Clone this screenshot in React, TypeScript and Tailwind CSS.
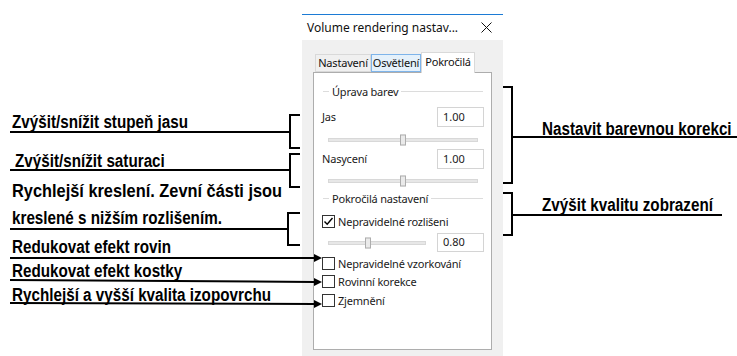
import React from "react";

const ui = "font-['Noto_Sans','Open_Sans',sans-serif]";

function Ann({ className = "", children }: { className?: string; children: React.ReactNode }) {
  return <div className={`origin-left whitespace-nowrap ${className}`}>{children}</div>;
}

function GroupHeader({ label }: { label: string }) {
  return (
    <div className="flex items-center h-[16px] pl-[9px] pr-[8px]">
      <div className="w-[6px] h-px bg-[#dcdcdc]" />
      <span className="mx-[3px] text-[11px] tracking-[-0.2px] leading-none text-[#1a1a1a]">{label}</span>
      <div className="flex-1 h-px bg-[#dcdcdc]" />
    </div>
  );
}

function Input({ value, h = 20 }: { value: string; h?: number }) {
  return (
    <div
      className={`w-[47px] ${h === 20 ? "h-[20px]" : "h-[19px]"} bg-white border border-[#d4d4d4] flex items-center pl-[5px] text-[11px] text-[#1a1a1a]`}
    >
      {value}
    </div>
  );
}

function Slider({ w, thumb }: { w: number; thumb: number }) {
  return (
    <div className="relative h-[4px] bg-[#e7e7e7] border border-[#d8d8d8]" style={{ width: w }}>
      <div
        className="absolute top-1/2 -translate-y-1/2 w-[6px] h-[11px] bg-[#eaeaea] border border-[#adadad]"
        style={{ left: thumb }}
      />
    </div>
  );
}

function Check({ checked = false, label }: { checked?: boolean; label: string }) {
  return (
    <div className="flex items-center pl-[8px] gap-[3px] h-full">
      <div className="w-[13px] h-[13px] border border-[#333] bg-white flex items-center justify-center">
        {checked && (
          <svg width="11" height="11" viewBox="0 0 11 11">
            <path d="M1.5 5.5 L4.2 8.3 L9.5 2" stroke="#000" strokeWidth="1.4" fill="none" />
          </svg>
        )}
      </div>
      <span className="text-[11px] tracking-[-0.2px] leading-none text-[#1a1a1a]">{label}</span>
    </div>
  );
}

function Dialog() {
  return (
    <div className={`w-[201px] shrink-0 mt-[14px] flex flex-col border-t border-[#1c7bd5] ${ui}`}>
      <div className="h-[25px] bg-white flex items-center justify-between pl-[5px] pr-[11px]">
        <span className="text-[12px] text-[#111]">Volume rendering nastav...</span>
        <svg width="11" height="11" viewBox="0 0 11 11">
          <path d="M0.5 0.5 L10.5 10.5 M10.5 0.5 L0.5 10.5" stroke="#111" strokeWidth="1" />
        </svg>
      </div>
      <div className="flex-1 bg-[#f0f0f0] pt-[12px] px-[11px] pb-[6px] flex flex-col">
        <div className="flex items-end h-[20px] pl-[2px] text-[11px] tracking-[-0.2px] text-[#111]">
          <div className="w-[56px] h-[18px] border border-[#d9d9d9] bg-[#f0f0f0] flex items-center justify-center">
            Nastavení
          </div>
          <div className="w-[50px] h-[18px] border border-[#7eb4ea] bg-[#e5f1fb] flex items-center justify-center">
            Osvětlení
          </div>
          <div className="relative z-10 -mb-px w-[54px] h-[21px] border border-b-0 border-[#d9d9d9] bg-white flex items-center justify-center pb-[2px]">
            Pokročilá
          </div>
        </div>
        <div className="flex-1 bg-white border border-[#adadad] flex flex-col">
          <div className="mt-[10px]">
            <GroupHeader label="Úprava barev" />
          </div>
          <div className="mt-[8px] h-[20px] flex items-center justify-between pl-[8px] pr-[7px]">
            <span className="text-[11px] tracking-[-0.2px] text-[#1a1a1a]">Jas</span>
            <Input value="1.00" />
          </div>
          <div className="mt-[7px] h-[12px] flex items-center pl-[14px]">
            <Slider w={150} thumb={71} />
          </div>
          <div className="mt-[3px] h-[20px] flex items-center justify-between pl-[8px] pr-[7px]">
            <span className="text-[11px] tracking-[-0.2px] text-[#1a1a1a]">Nasycení</span>
            <Input value="1.00" />
          </div>
          <div className="mt-[6px] h-[12px] flex items-center pl-[14px]">
            <Slider w={150} thumb={71} />
          </div>
          <div className="mt-[3px]">
            <GroupHeader label="Pokročilá nastavení" />
          </div>
          <div className="mt-[7px] h-[17px]">
            <Check checked label="Nepravidelné rozlišeni" />
          </div>
          <div className="mt-[3px] h-[19px] flex items-center pl-[14px] pr-[7px]">
            <Slider w={98} thumb={36} />
            <div className="ml-auto">
              <Input value="0.80" h={19} />
            </div>
          </div>
          <div className="mt-[2px] h-[18px]">
            <Check label="Nepravidelné vzorkování" />
          </div>
          <div className="h-[19px]">
            <Check label="Rovinní korekce" />
          </div>
          <div className="h-[18px]">
            <Check label="Zjemnění" />
          </div>
        </div>
      </div>
    </div>
  );
}

export default function App() {
  return (
    <div className="relative w-[737px] h-[356px] bg-white overflow-hidden flex">
      <div className="w-[302px] shrink-0 flex flex-col pl-[12px] font-['Liberation_Sans',Arial,sans-serif] font-bold text-[18px] text-black">
        <Ann className="mt-[112px] leading-[20px] scale-x-[0.846]">Zvýšit/snížit stupeň jasu</Ann>
        <Ann className="mt-[19px] ml-[3px] leading-[20px] scale-x-[0.846]">Zvýšit/snížit saturaci</Ann>
        <Ann className="mt-[6.5px] leading-[27px] scale-x-[0.909]">Rychlejší kreslení. Zevní části jsou</Ann>
        <Ann className="leading-[27px] scale-x-[0.846]">kreslené s nižším rozlišením.</Ann>
        <Ann className="mt-[3.5px] leading-[24px] scale-x-[0.846]">Redukovat efekt rovin</Ann>
        <Ann className="leading-[24px] scale-x-[0.846]">Redukovat efekt kostky</Ann>
        <Ann className="leading-[24px] scale-x-[0.846]">Rychlejší a vyšší kvalita izopovrchu</Ann>
      </div>
      <Dialog />
      <div className="flex-1 flex flex-col pl-[39px] font-['Liberation_Sans',Arial,sans-serif] font-bold text-[18px] text-black">
        <Ann className="mt-[119px] leading-[20px] scale-x-[0.846]">Nastavit barevnou korekci</Ann>
        <Ann className="mt-[56px] leading-[20px] scale-x-[0.846]">Zvýšit kvalitu zobrazení</Ann>
      </div>
      <svg
        className="absolute inset-0 pointer-events-none"
        width="737"
        height="356"
        viewBox="0 0 737 356"
        fill="none"
        stroke="#000"
        strokeWidth="2"
      >
        <path d="M10 132 H290 M300 115 H290 V148 H300" />
        <path d="M10 170 H290 M300 154 H290 V187 H300" />
        <path d="M10 229 H288 M300 213 H288 V245 H300" />
        <path d="M10 258 L315 258" />
        <polygon points="322,258 314,254 314,262" fill="#000" stroke="none" />
        <path d="M10 280 L315 282" />
        <polygon points="322,282 314,278 314,286" fill="#000" stroke="none" />
        <path d="M10 303 L315 304" />
        <polygon points="322,304 314,300 314,308" fill="#000" stroke="none" />
        <path d="M503 87 H512 V183 H503 M512 137 H737" />
        <path d="M503 193 H512 V235 H503 M512 215 H722" />
      </svg>
    </div>
  );
}
